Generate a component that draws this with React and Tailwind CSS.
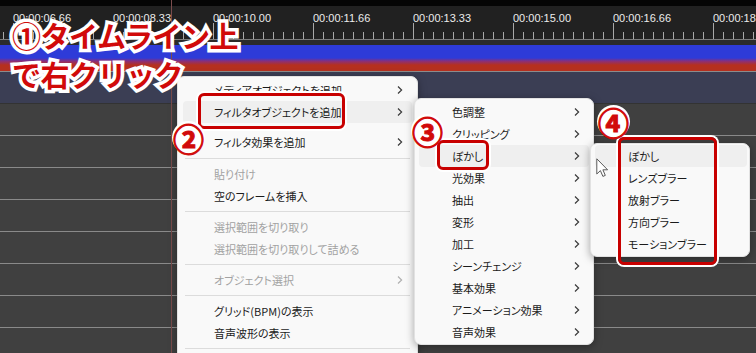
import React from 'react';

const stamps = ['00:00:06.66', '00:00:08.33', '00:00:10.00', '00:00:11.66', '00:00:13.33', '00:00:15.00', '00:00:16.66', '00:00:18.33'];

const menu1 = [
  { label: 'メディアオブジェクトを追加', sub: true, clip: true },
  { label: 'フィルタオブジェクトを追加', sub: true, hl: true },
  { label: 'フィルタ効果を追加', sub: true, gap: true },
  { sep: 10 },
  { label: '貼り付け', disabled: true },
  { label: '空のフレームを挿入' },
  { sep: 9 },
  { label: '選択範囲を切り取り', disabled: true },
  { label: '選択範囲を切り取りして詰める', disabled: true },
  { sep: 9 },
  { label: 'オブジェクト選択', disabled: true, sub: true },
  { sep: 9 },
  { label: 'グリッド(BPM)の表示' },
  { label: '音声波形の表示' },
  { sep: 9 },
];

const menu2 = ['色調整', 'クリッピング', 'ぼかし', '光効果', '抽出', '変形', '加工', 'シーンチェンジ', '基本効果', 'アニメーション効果', '音声効果'];
const menu3 = ['ぼかし', 'レンズブラー', '放射ブラー', '方向ブラー', 'モーションブラー'];

const Chevron = ({ color = '#3a3a3a' }) => (
  <svg width="6" height="10" viewBox="0 0 6 10" className="shrink-0">
    <path d="M1 1.5 L4.6 5 L1 8.5" fill="none" stroke={color} strokeWidth="1.2" />
  </svg>
);

const Row = ({ label, sub, disabled, hl, inset, pl, pr, clip }) => (
  <div className={`h-[22px] ${inset}`}>
    <div className={`h-full flex items-center rounded-[4px] ${pl} ${pr} ${hl ? 'bg-[#efefef]' : ''}`}>
      {clip ? (
        <span className="flex-1 h-[11px] mt-[3px] overflow-hidden flex flex-col justify-end">
          <span className="block leading-[14px] text-[#1b1b1b]">{label}</span>
        </span>
      ) : (
        <span className={`flex-1 leading-none ${disabled ? 'text-[#a2a2a2]' : 'text-[#1b1b1b]'}`}>{label}</span>
      )}
      {sub && <Chevron color={disabled ? '#b0b0b0' : '#3a3a3a'} />}
    </div>
  </div>
);

const Circled = ({ ch, className }) => (
  <div className={`absolute w-[33px] h-[33px] rounded-full bg-white flex items-center justify-center ${className}`}>
    <span className="text-[31px] leading-none font-bold text-[#d10a0a] [-webkit-text-stroke:1px_#d10a0a]">{ch}</span>
  </div>
);

const RedBox = ({ className }) => (
  <div className={`absolute border-[3px] border-[#c80000] rounded-[6px] shadow-[0_0_0_2px_#ffffff] ${className}`} />
);

const Menu = ({ className, children }) => (
  <div className={`absolute bg-[#f9f9f9] rounded-[7px] border border-[#e2e2e2] shadow-[0_2px_8px_rgba(0,0,0,0.35)] text-[11px] [font-feature-settings:'palt'] ${className}`}>
    {children}
  </div>
);

export default function App() {
  return (
    <div className="relative w-[756px] h-[353px] overflow-hidden bg-[#404040] font-['Noto_Sans_CJK_JP',sans-serif]">
      {/* timeline */}
      <div className="h-[6px] bg-[#050505]" />
      <div className="h-[33px] bg-[#212121] relative">
        <div className="flex pl-[13px] pt-[5px]">
          {stamps.map((s) => (
            <div key={s} className="w-[100px] shrink-0 text-[11px] leading-[14px] text-[#ececec] font-['Liberation_Sans',sans-serif]">{s}</div>
          ))}
        </div>
        <svg width="756" height="16" className="absolute left-0 bottom-0">
          {Array.from({ length: 76 }).map((_, i) => {
            const x = 3 + i * 10 + 0.5;
            const major = i % 10 === 1;
            return <line key={i} x1={x} x2={x} y1={major ? 0 : 9} y2={16} stroke="#a8a8a8" strokeWidth="1" />;
          })}
        </svg>
      </div>
      <div className="h-px bg-[#7d7d7d]" />
      <div className="h-[5px] bg-[#2b2b2b]" />
      <div className="h-[26px] bg-[linear-gradient(to_bottom,#2e3bd8_0%,#2e3bd8_50%,#8a2f7a_62%,#b5301f_77%,#b5301f_100%)]" />
      <div className="h-px bg-[#8c8c8c]" />
      <div className="h-[31px] bg-[#3b3e54]" />
      <div className="h-px bg-[#333333]" />
      {Array.from({ length: 8 }).map((_, i) => (
        <div key={i} className="h-[32px] border-b border-[#8a8a8a]" />
      ))}

      {/* playhead */}
      <div className="absolute left-[171px] top-0 h-full w-px bg-[#7a4c4c]" />

      {/* menu 1 */}
      <Menu className="left-[177px] top-[76px] w-[241px] h-[290px] pt-[2px]">
        {menu1.map((it, i) =>
          it.sep ? (
            <div key={i} className={`${it.sep === 10 ? 'h-[10px]' : 'h-[9px]'} flex items-center px-[7px]`}>
              <div className="h-px w-full bg-[#dcdcdc]" />
            </div>
          ) : (
            <div key={i} className={it.gap ? 'mt-[8px]' : ''}>
              <Row {...it} inset="px-[5px]" pl="pl-[31px]" pr="pr-[9px]" />
            </div>
          )
        )}
      </Menu>

      {/* menu 2 */}
      <Menu className="left-[414px] top-[98px] w-[180px] h-[247px] pt-[2px]">
        {menu2.map((l) => (
          <Row key={l} label={l} sub hl={l === 'ぼかし'} inset="px-[4px]" pl="pl-[33px]" pr="pr-[9px]" />
        ))}
      </Menu>

      {/* menu 3 */}
      <Menu className="left-[590px] top-[143px] w-[160px] h-[114px] pt-[1px]">
        {menu3.map((l, i) => (
          <Row key={l} label={l} hl={i === 0} inset="pl-[4px] pr-[2px]" pl="pl-[33px]" pr="pr-[6px]" />
        ))}
      </Menu>

      {/* cursor */}
      <svg width="13" height="20" viewBox="0 0 13 20" className="absolute left-[596px] top-[158px]">
        <path d="M0.8 0.8 L0.8 16 L4.4 12.6 L6.9 18.4 L9.3 17.4 L6.9 11.8 L11.6 11.8 Z" fill="#ffffff" stroke="#5a5a5a" strokeWidth="1" strokeLinejoin="round" />
      </svg>

      {/* annotations */}
      <RedBox className="left-[198px] top-[93px] w-[147px] h-[36px]" />
      <RedBox className="left-[437px] top-[140px] w-[52px] h-[30px]" />
      <RedBox className="left-[618px] top-[137px] w-[99px] h-[128px]" />

      <Circled ch="②" className="left-[172px] top-[121px]" />
      <Circled ch="③" className="left-[411px] top-[114px]" />
      <Circled ch="④" className="left-[597px] top-[105px]" />

      <div className="absolute left-[12px] top-[16px] text-[29px] leading-[39px] font-bold text-[#d10a0a] [-webkit-text-stroke:7px_#ffffff] [paint-order:stroke_fill] tracking-[-0.5px]">
        <div>①タイムライン上</div>
        <div>で右クリック</div>
      </div>
    </div>
  );
}
